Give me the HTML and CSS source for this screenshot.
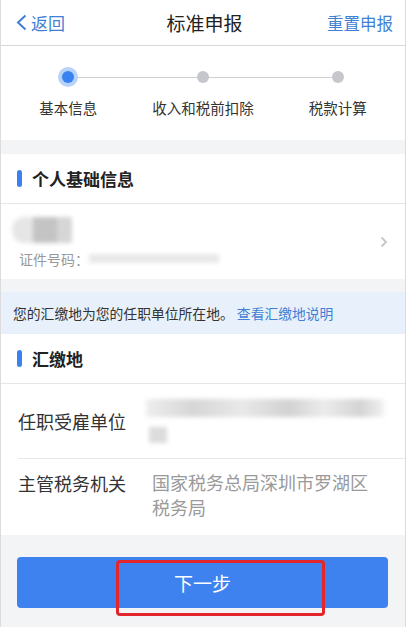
FILE: index.html
```html
<!DOCTYPE html>
<html lang="zh-CN">
<head>
  <meta charset="UTF-8" />
  <meta name="viewport" content="width=device-width, initial-scale=1" />
  <title>标准申报</title>
  <link rel="stylesheet" href="styles.css">
</head>
<body>
  <div class="page">
    <header class="topbar">
      <a class="back" href="#">
        <svg width="11" height="17" viewBox="0 0 11 17"><path d="M9.5 1.5 L2 8.5 L9.5 15.5" fill="none" stroke="#3f7fd5" stroke-width="2"/></svg>
        <span>返回</span>
      </a>
      <h1 class="title">标准申报</h1>
      <a class="reset" href="#">重置申报</a>
    </header>

    <div class="steps">
      <div class="step active"><span class="dot"></span><span class="step-label">基本信息</span></div>
      <div class="step"><span class="dot"></span><span class="step-label">收入和税前扣除</span></div>
      <div class="step"><span class="dot"></span><span class="step-label">税款计算</span></div>
    </div>

    <section class="card">
      <div class="card-head"><span class="bar"></span>个人基础信息</div>
      <div class="person-row">
        <div class="person-info">
          <div class="blur name-blur"></div>
          <div class="id-line">证件号码：<span class="blur id-blur"></span></div>
        </div>
        <svg class="chev" width="8" height="12" viewBox="0 0 8 12"><path d="M1.5 1.5 L6 6 L1.5 10.5" fill="none" stroke="#c8c8c8" stroke-width="2"/></svg>
      </div>
    </section>

    <div class="notice">您的汇缴地为您的任职单位所在地。 <a href="#">查看汇缴地说明</a></div>

    <section class="card">
      <div class="card-head"><span class="bar"></span>汇缴地</div>
      <div class="field">
        <span class="field-label">任职受雇单位</span>
        <div class="field-value">
          <div class="blur emp-blur"></div>
          <div class="blur emp-blur2"></div>
        </div>
      </div>
      <div class="field">
        <span class="field-label">主管税务机关</span>
        <div class="field-value">国家税务总局深圳市罗湖区税务局</div>
      </div>
    </section>

    <div class="footer">
      <button class="next-btn">下一步</button>
      <span class="mark"></span>
    </div>
  </div>
</body>
</html>
```

FILE: styles.css
```css
* { box-sizing: border-box; }
body {
  margin: 0;
  font-family: "Noto Sans CJK SC", "Noto Sans", sans-serif;
  background: #f3f4f6;
  color: #333;
}
a { text-decoration: none; }
.page {
  min-height: 627px;
  background: #f3f4f6;
  border-left: 1px solid #dcdcdc;
  border-right: 1px solid #dcdcdc;
}
.topbar {
  height: 46px;
  background: #fff;
  border-bottom: 1px solid #d9d9d9;
  display: flex;
  align-items: center;
  justify-content: space-between;
  padding: 0 12px 0 15px;
}
.back {
  display: flex;
  align-items: center;
  gap: 4px;
  color: #3f7fd5;
  font-size: 17px;
  width: 80px;
}
.title {
  margin: 0;
  font-size: 19px;
  font-weight: normal;
  color: #222;
}
.reset {
  color: #3f7fd5;
  font-size: 16.5px;
  width: 80px;
  text-align: right;
}
.steps {
  display: grid;
  grid-template-columns: repeat(3, 1fr);
  background: #fff;
  height: 94px;
  padding-top: 21px;
}
.step {
  position: relative;
  display: flex;
  flex-direction: column;
  align-items: center;
}
.step:not(:last-child)::after {
  content: "";
  position: absolute;
  left: 50%;
  width: 100%;
  top: 10px;
  height: 1px;
  background: #cfd0d4;
}
.dot {
  position: relative;
  z-index: 1;
  width: 20px;
  height: 20px;
  border-radius: 50%;
  display: flex;
  align-items: center;
  justify-content: center;
}
.dot::before {
  content: "";
  width: 12px;
  height: 12px;
  border-radius: 50%;
  background: #c6c7cd;
}
.step.active .dot { background: #b7d3fa; }
.step.active .dot::before { background: #3a82f0; }
.step-label {
  margin-top: 10px;
  font-size: 14.5px;
  color: #333;
}
.card {
  background: #fff;
  margin-top: 14px;
}
.notice + .card { margin-top: 0; }
.card-head {
  height: 50px;
  display: flex;
  align-items: center;
  padding-left: 16px;
  font-size: 17px;
  font-weight: bold;
  color: #222;
  border-bottom: 1px solid #e6e6e6;
}
.bar {
  width: 5px;
  height: 17px;
  border-radius: 3px;
  background: #3a82f0;
  margin-right: 10px;
}
.person-row {
  height: 75px;
  display: flex;
  align-items: center;
  justify-content: space-between;
  padding: 0 17px 0 11px;
}
.person-info { padding-top: 2px; }
.blur {
  background: #cfcfcf;
  filter: blur(2px);
}
.name-blur {
  width: 60px;
  height: 26px;
  border-radius: 12px 2px 2px 12px;
  background: linear-gradient(90deg, #e6e6e6 0 35%, #c4c4c4 35% 75%, #d6d6d6 75%);
  margin-bottom: 6px;
}
.id-line {
  display: flex;
  align-items: center;
  font-size: 14px;
  color: #999;
  padding-left: 7px;
}
.id-blur {
  display: inline-block;
  width: 130px;
  height: 9px;
  background: #e8e8e8;
}
.notice {
  margin-top: 13px;
  height: 42px;
  background: #e8f1fb;
  display: flex;
  align-items: center;
  padding-left: 12px;
  font-size: 13.8px;
  color: #333;
  white-space: pre;
}
.notice a { color: #3f7fd5; }
.field {
  display: flex;
  align-items: center;
  min-height: 75px;
  margin-left: 17px;
  padding-right: 17px;
  border-bottom: 1px solid #e8e8e8;
}
.field:last-child { border-bottom: none; min-height: 76px; align-items: flex-start; padding-top: 11px; }
.field-label {
  width: 134px;
  flex-shrink: 0;
  font-size: 18px;
  color: #333;
}
.field-value {
  font-size: 18px;
  line-height: 25px;
  color: #9a9a9a;
  padding-right: 8px;
}
.emp-blur {
  width: 238px;
  height: 18px;
  margin-left: -6px;
  background: linear-gradient(90deg, #eeeeee, #d6d6d6 20%, #e9e9e9 40%, #d2d2d2 60%, #ececec 75%, #d4d4d4 90%, #f1f1f1);
}
.emp-blur2 {
  width: 18px;
  height: 16px;
  margin-top: 10px;
  margin-left: -3px;
  background: #dcdcdc;
}
.footer {
  position: relative;
  padding: 22px 17px 0 16px;
}
.next-btn {
  display: block;
  width: 100%;
  height: 51px;
  border: none;
  border-radius: 4px;
  background: #3e82ef;
  color: #fff;
  font-family: inherit;
  font-size: 19px;
}
.mark {
  position: absolute;
  left: 115px;
  top: 25px;
  width: 209px;
  height: 56px;
  border: 3px solid #e2262b;
  border-radius: 4px;
}
```
